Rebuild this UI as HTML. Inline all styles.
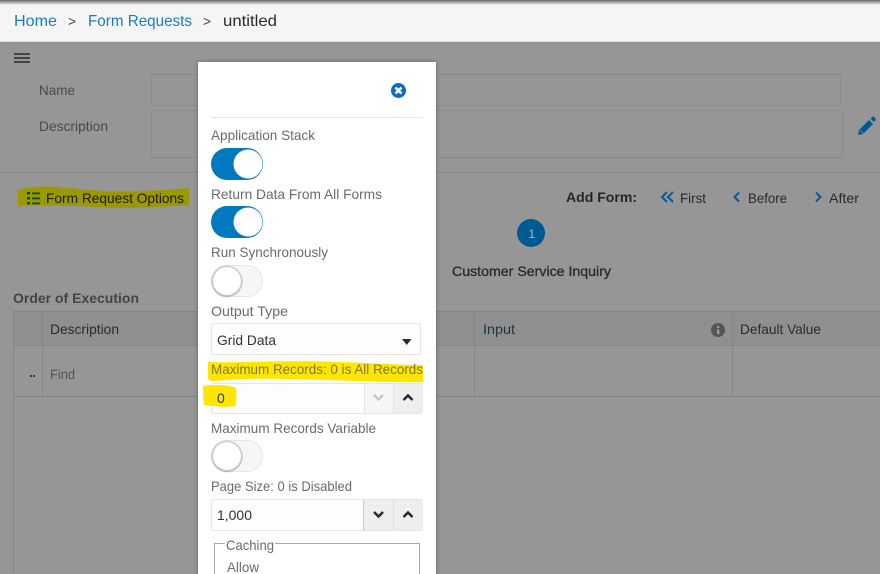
<!DOCTYPE html>
<html><head><meta charset="utf-8"><title>Form Request</title>
<style>
html,body{margin:0;padding:0;width:880px;height:574px;overflow:hidden;background:#969696}
svg{display:block}
text{font-family:"Liberation Sans",sans-serif;font-size:14px;fill:#555}
.g{fill:#2b2b2b}
.l{fill:#6b6b6b}
.d{fill:#4a4a4a}
.b{fill:#1a7cc0;font-size:16px}
</style></head><body>
<svg width="880" height="574" viewBox="0 0 880 574" xmlns="http://www.w3.org/2000/svg">
<defs>
<linearGradient id="ts" x1="0" y1="0" x2="0" y2="1"><stop offset="0" stop-color="#666"/><stop offset="1" stop-color="#f5f5f5"/></linearGradient>
<filter id="sh" x="-10%" y="-10%" width="120%" height="120%"><feDropShadow dx="0" dy="0" stdDeviation="2" flood-color="#000" flood-opacity=".35"/></filter>
<filter id="ks" x="-20%" y="-20%" width="140%" height="140%"><feDropShadow dx="0" dy="0.5" stdDeviation="0.8" flood-color="#000" flood-opacity=".45"/></filter>
</defs>
<rect width="880" height="574" fill="#969696"/>
<!-- header -->
<rect width="880" height="41" fill="#f5f5f5"/>
<rect width="880" height="5" fill="url(#ts)"/>
<rect y="41" width="880" height="1" fill="#d8dde0"/>
<text class="b" x="14" y="26" textLength="43" lengthAdjust="spacingAndGlyphs">Home</text>
<text x="68" y="26" textLength="8" lengthAdjust="spacingAndGlyphs" style="font-size:14px;fill:#444">&gt;</text>
<text class="b" x="88" y="26" textLength="104" lengthAdjust="spacingAndGlyphs">Form Requests</text>
<text x="203" y="26" textLength="8" lengthAdjust="spacingAndGlyphs" style="font-size:14px;fill:#444">&gt;</text>
<text x="223" y="26" textLength="54" lengthAdjust="spacingAndGlyphs" style="font-size:16px;fill:#2a2a2a">untitled</text>
<!-- hamburger -->
<g fill="#444"><rect x="14" y="53" width="16" height="2"/><rect x="14" y="57" width="16" height="2"/><rect x="14" y="61" width="16" height="2"/></g>
<!-- form -->
<text class="d" x="39" y="95" textLength="36" lengthAdjust="spacingAndGlyphs">Name</text>
<text class="d" x="39" y="131" textLength="69" lengthAdjust="spacingAndGlyphs">Description</text>
<rect x="151.500" y="74.500" width="689" height="31" rx="2" fill="#969696" stroke="#8a8a8a"/>
<rect x="151.500" y="110.500" width="691" height="47" rx="2" fill="#969696" stroke="#8a8a8a"/>
<path d="M858 135l1-5 10-10 4 4-10 10z M870.500 118.500l1.500-1.300c.8-.6 1.700-.6 2.300 0l1 1c.6.700.6 1.600 0 2.300l-1.400 1.500z" fill="#005a92"/>
<path d="M860 130l4 4" stroke="#969696" stroke-width=".8"/>
<rect y="172" width="880" height="1" fill="#868686"/>
<!-- highlight left -->
<path d="M18 190C40 184 60 187 90 190S150 191 189 188V205C160 207 130 209 95 207S40 205 18 206Z" fill="#9a9a00"/>
<g fill="#0c4a12"><rect x="27" y="192" width="3" height="2.500"/><rect x="27" y="197" width="3" height="2.500"/><rect x="27" y="202" width="3" height="2.500"/><rect x="32" y="192.500" width="8" height="1.800"/><rect x="32" y="197.500" width="8" height="1.800"/><rect x="32" y="202.500" width="8" height="1.800"/></g>
<text x="46" y="203" textLength="138" lengthAdjust="spacingAndGlyphs" style="fill:#1c1c08">Form Request Options</text>
<!-- add form -->
<text x="566" y="202" textLength="71" lengthAdjust="spacingAndGlyphs" style="font-weight:bold;fill:#262626">Add Form:</text>
<g fill="none" stroke="#0a5a96" stroke-width="2"><path d="M667 192l-5 5 5 5M673 192l-5 5 5 5"/><path d="M739 192.500l-4.500 4.500 4.500 4.500"/><path d="M816 192.500l4.500 4.500-4.500 4.500"/></g>
<text class="g" x="680" y="203" textLength="26" lengthAdjust="spacingAndGlyphs">First</text>
<text class="g" x="748" y="203" textLength="39" lengthAdjust="spacingAndGlyphs">Before</text>
<text class="g" x="829" y="203" textLength="30" lengthAdjust="spacingAndGlyphs">After</text>
<circle cx="531" cy="233" r="14" fill="#005a92"/>
<text x="528.500" y="238" style="font-size:12px;fill:#a9b9c6">1</text>
<text x="452" y="276" textLength="159" lengthAdjust="spacingAndGlyphs" style="fill:#2a2a2a;stroke:#2a2a2a;stroke-width:.3">Customer Service Inquiry</text>
<!-- table -->
<text x="13" y="303" textLength="126" lengthAdjust="spacingAndGlyphs" style="font-weight:bold;fill:#444">Order of Execution</text>
<rect x="13" y="311" width="867" height="34" fill="#8f8f8f"/>
<g fill="#858585"><rect x="13" y="311" width="867" height="1"/><rect x="13" y="345" width="867" height="1"/><rect x="13" y="396" width="867" height="1"/><rect x="13" y="311" width="1" height="263"/><rect x="42" y="311" width="1" height="85"/><rect x="474" y="311" width="1" height="85"/><rect x="732" y="311" width="1" height="85"/></g>
<text class="g" x="50" y="334" textLength="69" lengthAdjust="spacingAndGlyphs">Description</text>
<text x="50" y="379" textLength="25" lengthAdjust="spacingAndGlyphs" style="fill:#555">Find</text>
<g fill="#3a3a3a"><rect x="30" y="375" width="2" height="2"/><rect x="33" y="375" width="2" height="2"/></g>
<text x="483" y="334" textLength="32" lengthAdjust="spacingAndGlyphs" style="fill:#1f3546">Input</text>
<circle cx="718" cy="330" r="7" fill="#555"/>
<rect x="717" y="329.500" width="2.400" height="4.500" fill="#9a9a9a"/><rect x="717" y="326" width="2.400" height="2" fill="#9a9a9a"/>
<text class="g" x="740" y="334" textLength="81" lengthAdjust="spacingAndGlyphs">Default Value</text>
<!-- modal -->
<rect x="198" y="62" width="238" height="520" fill="#fff" filter="url(#sh)"/>
<circle cx="398.500" cy="90.500" r="7.500" fill="#0a6cc4"/>
<path d="M395.500 87.500l6 6M401.500 87.500l-6 6" stroke="#fff" stroke-width="2.600"/>
<rect x="211" y="117" width="212" height="1" fill="#e4e4e4"/>
<text class="l" x="211" y="140" textLength="104" lengthAdjust="spacingAndGlyphs">Application Stack</text>
<rect x="211" y="148" width="52" height="32" rx="16" fill="#0079c1"/>
<circle cx="248" cy="164" r="14.500" fill="#fff"/>
<text class="l" x="211" y="199" textLength="171" lengthAdjust="spacingAndGlyphs">Return Data From All Forms</text>
<rect x="211" y="206" width="52" height="32" rx="16" fill="#0079c1"/>
<circle cx="248" cy="222" r="14.500" fill="#fff"/>
<text class="l" x="211" y="257" textLength="117" lengthAdjust="spacingAndGlyphs">Run Synchronously</text>
<rect x="211.500" y="265.500" width="51" height="31" rx="15.500" fill="#f6f6f6" stroke="#e6e6e6"/>
<circle cx="227" cy="281" r="14.500" fill="#fff" stroke="#c4c4c4" filter="url(#ks)"/>
<text class="l" x="211" y="316" textLength="77" lengthAdjust="spacingAndGlyphs">Output Type</text>
<rect x="211.500" y="323.500" width="209" height="31" rx="2" fill="#fdfdfd" stroke="#e4e4e4"/>
<text x="217" y="345" textLength="59" lengthAdjust="spacingAndGlyphs" style="fill:#333">Grid Data</text>
<path d="M402 339h9.500l-4.750 6z" fill="#2b2b2b"/>
<!-- bright highlights -->
<path d="M208 362C240 363 290 360 340 362S400 365 423 365V382C390 383 340 380 290 379S235 380 212 381C208 380 208 378 208 376Z" fill="#ffe600"/>
<rect x="211.500" y="383.500" width="211" height="30" rx="2" fill="#fdfdfd" stroke="#e4e4e4"/>
<rect x="364" y="384" width="29" height="29" fill="#f6f6f6"/><rect x="393.500" y="384" width="29" height="29" fill="#eeeeee"/>
<rect x="364" y="384" width="1" height="29" fill="#e4e4e4"/><rect x="393" y="384" width="1" height="29" fill="#e4e4e4"/>
<path d="M203 386C215 384 230 385 236 388C237 394 236 401 236 406C225 408 212 406 204 405C203 398 203 392 203 386Z" fill="#ffe600"/>
<text class="l" x="211" y="374" textLength="212" lengthAdjust="spacingAndGlyphs" style="fill:#7f7a1e">Maximum Records: 0 is All Records</text>
<text x="217" y="403" style="fill:#333">0</text>
<path d="M374 395l4.500 4.500 4.500-4.500" fill="none" stroke="#c8c8c8" stroke-width="2.400"/>
<path d="M403.500 400l4.500-4.500 4.500 4.500" fill="none" stroke="#1d2a3a" stroke-width="2.400"/>
<text class="l" x="211" y="433" textLength="165" lengthAdjust="spacingAndGlyphs">Maximum Records Variable</text>
<rect x="211.500" y="440.500" width="51" height="31" rx="15.500" fill="#f6f6f6" stroke="#e6e6e6"/>
<circle cx="227" cy="456" r="14.500" fill="#fff" stroke="#c4c4c4" filter="url(#ks)"/>
<text class="l" x="211" y="491" textLength="141" lengthAdjust="spacingAndGlyphs">Page Size: 0 is Disabled</text>
<rect x="211.500" y="499.500" width="211" height="31" rx="2" fill="#fdfdfd" stroke="#e4e4e4"/>
<rect x="364" y="500" width="59" height="30" fill="#eeeeee"/>
<rect x="363" y="500" width="1" height="30" fill="#c8c8c8"/><rect x="393" y="500" width="1" height="30" fill="#dcdcdc"/>
<text x="217" y="520" textLength="35" lengthAdjust="spacingAndGlyphs" style="fill:#333">1,000</text>
<path d="M374 512l4.500 4.500 4.500-4.500" fill="none" stroke="#1d2a3a" stroke-width="2.400"/>
<path d="M403.500 517l4.500-4.500 4.500 4.500" fill="none" stroke="#1d2a3a" stroke-width="2.400"/>
<path d="M225 543.500H214.500V580M275 543.500H419.500V580" fill="none" stroke="#a8a8a8"/>
<text class="l" x="226" y="550" textLength="48" lengthAdjust="spacingAndGlyphs">Caching</text>
<text class="l" x="227" y="572" textLength="32" lengthAdjust="spacingAndGlyphs">Allow</text>
</svg>
</body></html>
